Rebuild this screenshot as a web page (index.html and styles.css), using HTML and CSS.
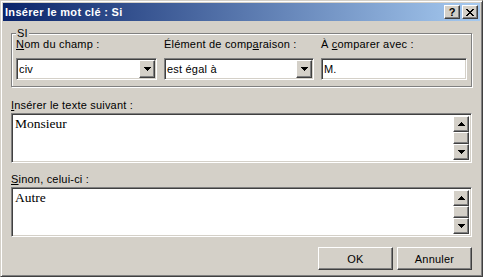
FILE: index.html
```html
<!DOCTYPE html>
<html lang="fr">
<head>
    <meta charset="UTF-8">
    <meta name="viewport" content="width=device-width, initial-scale=1.0">
    <title>Insérer le mot clé : Si</title>
    <link rel="stylesheet" href="styles.css">
</head>
<body>
    <div class="window">
        <div class="titlebar">
            <span class="title">Insérer le mot clé : Si</span>
            <div class="title-buttons">
                <span class="tbtn help">?</span>
                <span class="tbtn close">
                    <svg width="8" height="7" viewBox="0 0 8 7" shape-rendering="crispEdges"><path d="M0 0h2v1H0zM6 0h2v1H6zM1 1h2v1H1zM5 1h2v1H5zM2 2h4v1H2zM3 3h2v1H3zM2 4h4v1H2zM1 5h2v1H1zM5 5h2v1H5zM0 6h2v1H0zM6 6h2v1H6z"/></svg>
                </span>
            </div>
        </div>

        <div class="content">
            <div class="group">
                <span class="group-title">SI</span>
                <div class="fields">
                    <div class="field">
                        <label><u>N</u>om du champ :</label>
                        <div class="combo">
                            <span class="combo-text">civ</span>
                            <span class="drop">
                                <svg width="7" height="4" viewBox="0 0 7 4" shape-rendering="crispEdges"><path d="M0 0h7v1h-1v1h-1v1h-1v1h-1v-1h-1v-1h-1v-1h-1z"/></svg>
                            </span>
                        </div>
                    </div>
                    <div class="field">
                        <label>Élément de comp<u>a</u>raison :</label>
                        <div class="combo">
                            <span class="combo-text">est égal à</span>
                            <span class="drop">
                                <svg width="7" height="4" viewBox="0 0 7 4" shape-rendering="crispEdges"><path d="M0 0h7v1h-1v1h-1v1h-1v1h-1v-1h-1v-1h-1v-1h-1z"/></svg>
                            </span>
                        </div>
                    </div>
                    <div class="field">
                        <label>À <u>c</u>omparer avec :</label>
                        <input class="edit" type="text" value="M.">
                    </div>
                </div>
            </div>

            <label class="memo-label"><u>I</u>nsérer le texte suivant :</label>
            <div class="memo">
                <textarea>Monsieur</textarea>
                <div class="scrollbar">
                    <span class="sb-btn">
                        <svg width="7" height="4" viewBox="0 0 7 4" shape-rendering="crispEdges"><path d="M3 0h1v1h1v1h1v1h1v1h-7v-1h1v-1h1v-1h1z"/></svg>
                    </span>
                    <span class="sb-thumb"></span>
                    <span class="sb-btn">
                        <svg width="7" height="4" viewBox="0 0 7 4" shape-rendering="crispEdges"><path d="M0 0h7v1h-1v1h-1v1h-1v1h-1v-1h-1v-1h-1v-1h-1z"/></svg>
                    </span>
                </div>
            </div>

            <label class="memo-label second"><u>S</u>inon, celui-ci :</label>
            <div class="memo">
                <textarea>Autre</textarea>
                <div class="scrollbar">
                    <span class="sb-btn">
                        <svg width="7" height="4" viewBox="0 0 7 4" shape-rendering="crispEdges"><path d="M3 0h1v1h1v1h1v1h1v1h-7v-1h1v-1h1v-1h1z"/></svg>
                    </span>
                    <span class="sb-thumb"></span>
                    <span class="sb-btn">
                        <svg width="7" height="4" viewBox="0 0 7 4" shape-rendering="crispEdges"><path d="M0 0h7v1h-1v1h-1v1h-1v1h-1v-1h-1v-1h-1v-1h-1z"/></svg>
                    </span>
                </div>
            </div>

            <div class="actions">
                <button class="btn">OK</button>
                <button class="btn">Annuler</button>
            </div>
        </div>
    </div>
</body>
</html>
```

FILE: styles.css
```css
body {
    margin: 0;
    font-family: "Liberation Sans", Arial, sans-serif;
    font-size: 11px;
    letter-spacing: 0.2px;
    color: #000;
}

.window {
    width: 483px;
    height: 277px;
    box-sizing: border-box;
    display: flex;
    flex-direction: column;
    padding: 2px;
    background-color: #d4d0c8;
    border: 1px solid;
    border-color: #d4d0c8 #404040 #404040 #d4d0c8;
    box-shadow: inset 1px 1px #fff, inset -1px -1px #808080;
}

.titlebar {
    height: 18px;
    display: flex;
    align-items: center;
    justify-content: space-between;
    padding: 0 2px 0 2px;
    background: linear-gradient(to right, #0a246a, #a6caf0);
    color: #fff;
}

.title {
    font-weight: bold;
    letter-spacing: 0.3px;
}

.title-buttons {
    display: flex;
    gap: 2px;
}

.tbtn,
.drop,
.sb-btn,
.sb-thumb,
.btn {
    box-sizing: border-box;
    background-color: #d4d0c8;
    border: 1px solid;
    border-color: #fff #404040 #404040 #fff;
    box-shadow: inset -1px -1px #808080;
}

.tbtn {
    width: 16px;
    height: 14px;
    display: flex;
    align-items: center;
    justify-content: center;
    color: #000;
    font-weight: bold;
    font-size: 11px;
    letter-spacing: 0;
}

.content {
    flex: 1;
    display: flex;
    flex-direction: column;
    padding: 0 8px;
}

.group {
    position: relative;
    margin-top: 12px;
    padding: 4px 3px 6px 4px;
    border: 1px solid #808080;
    box-shadow: 1px 1px #fff, inset 1px 1px #fff;
}

.group-title {
    position: absolute;
    top: -7px;
    left: 4px;
    padding: 0 1px;
    line-height: 13px;
    background-color: #d4d0c8;
}

.fields {
    display: grid;
    grid-template-columns: 141px 150px 146px;
    column-gap: 7px;
}

.field label {
    display: block;
    line-height: 13px;
    margin-bottom: 7px;
}

.combo,
.edit,
.memo {
    box-sizing: border-box;
    background-color: #fff;
    border: 1px solid;
    border-color: #808080 #fff #fff #808080;
    box-shadow: inset 1px 1px #404040, inset -1px -1px #d4d0c8;
}

.combo {
    height: 22px;
    padding: 1px;
    display: flex;
    align-items: center;
}

.combo-text {
    flex: 1;
    padding-left: 1px;
}

.drop {
    width: 16px;
    align-self: stretch;
    display: flex;
    align-items: center;
    justify-content: center;
}

.edit {
    width: 100%;
    height: 22px;
    margin: 0;
    padding: 0 2px;
    font-family: inherit;
    font-size: 11px;
    letter-spacing: 0.2px;
    color: #000;
    outline: none;
}

.memo-label {
    display: block;
    margin-top: 12px;
    margin-bottom: 1px;
    line-height: 13px;
}

.memo-label.second {
    margin-top: 10px;
}

.memo {
    height: 50px;
    padding: 2px;
    display: flex;
}

.memo textarea {
    flex: 1;
    margin: 0;
    padding: 0 1px;
    border: 0;
    outline: none;
    resize: none;
    overflow: hidden;
    background: transparent;
    font-family: "Liberation Serif", "Times New Roman", serif;
    font-size: 13.5px;
    letter-spacing: 0;
    color: #000;
}

.scrollbar {
    width: 16px;
    display: flex;
    flex-direction: column;
}

.sb-btn {
    height: 16px;
    display: flex;
    align-items: center;
    justify-content: center;
}

.sb-thumb {
    flex: 1;
}

.actions {
    display: flex;
    justify-content: flex-end;
    gap: 4px;
    margin-top: 10px;
}

.btn {
    width: 75px;
    height: 23px;
    padding: 0;
    font-family: inherit;
    font-size: 11px;
    letter-spacing: 0.2px;
    color: #000;
}
```
